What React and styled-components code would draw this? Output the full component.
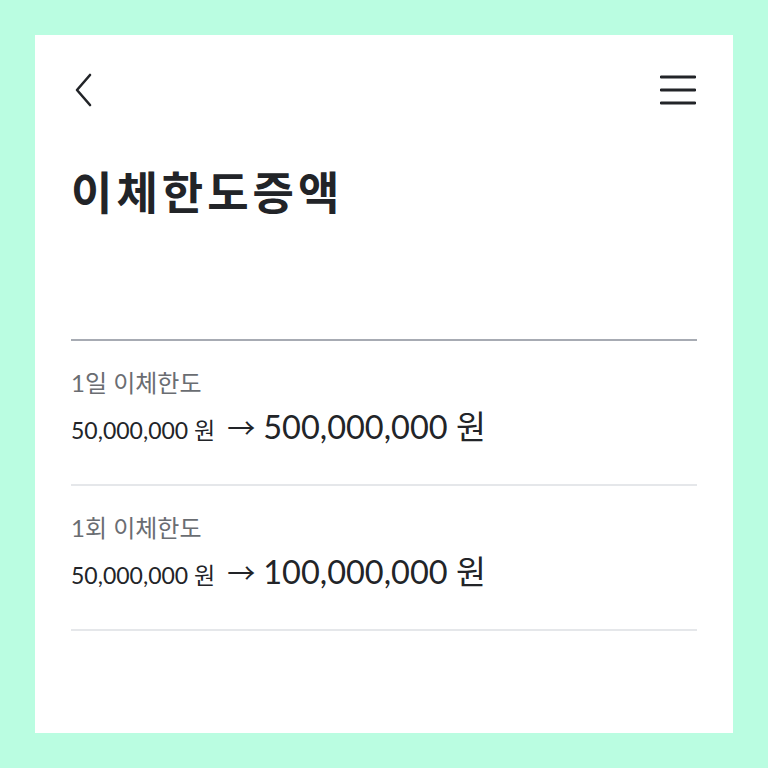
import React from 'react'
import styled, { createGlobalStyle } from 'styled-components'

const GlobalStyle = createGlobalStyle`
  html, body {
    margin: 0;
    padding: 0;
    background: #bafde1;
  }
  body {
    font-family: Lato, 'Noto Sans CJK KR', sans-serif;
  }
`

const Page = styled.div`
  width: 768px;
  height: 768px;
  box-sizing: border-box;
  padding: 35px;
  background: #bafde1;
`

const Card = styled.div`
  width: 698px;
  height: 698px;
  box-sizing: border-box;
  background: #fff;
  padding: 0 36px 0 36px;
`

const Header = styled.div`
  display: flex;
  justify-content: space-between;
  align-items: center;
  height: 110px;
`

const IconButton = styled.button`
  border: 0;
  background: none;
  padding: 0;
  display: flex;
  align-items: center;
  justify-content: center;
  width: ${p => p.$w}px;
  height: 40px;
  margin-right: ${p => p.$mr || 0}px;
  color: #222428;
`

const Title = styled.h1`
  margin: 16px 0 0 0;
  font-family: 'Noto Sans CJK KR', sans-serif;
  font-weight: 700;
  font-size: 45px;
  line-height: 60px;
  color: #222428;
  letter-spacing: 4px;
`

const List = styled.div`
  margin-top: 118px;
  border-top: 2px solid #a7abb3;
`

const Row = styled.div`
  padding: 27px 0 34px;
  border-bottom: 2px solid #e5e7ea;
`

const Label = styled.div`
  font-family: Lato, 'Noto Sans CJK KR', sans-serif;
  font-size: 24px;
  line-height: 30px;
  color: #6a6d72;
`

const Amounts = styled.div`
  display: flex;
  align-items: baseline;
  margin-top: 9px;
  line-height: 40px;
  color: #222428;
`

const From = styled.span`
  font-size: 23px;
`

const Arrow = styled.span`
  font-family: 'Noto Sans CJK KR', sans-serif;
  font-size: 28px;
  margin: 0 8px 0 12px;
`

const To = styled.span`
  font-size: 32.5px;
`

const limits = [
  { label: '1일 이체한도', from: '50,000,000 원', to: '500,000,000 원' },
  { label: '1회 이체한도', from: '50,000,000 원', to: '100,000,000 원' },
]

export default function App() {
  return (
    <>
      <GlobalStyle />
      <Page>
        <Card>
          <Header>
            <IconButton $w={24}>
              <svg width="20" height="36" viewBox="0 0 20 36" fill="none">
                <path d="M17 3 L4 18 L17 33" stroke="currentColor" strokeWidth="2.6" strokeLinecap="round" strokeLinejoin="round" />
              </svg>
            </IconButton>
            <IconButton $w={36} $mr={1}>
              <svg width="36" height="30" viewBox="0 0 36 30" fill="none">
                <path d="M1 2 H35 M1 15 H35 M1 28 H35" stroke="currentColor" strokeWidth="2.8" strokeLinecap="round" />
              </svg>
            </IconButton>
          </Header>
          <Title>이체한도증액</Title>
          <List>
            {limits.map(l => (
              <Row key={l.label}>
                <Label>{l.label}</Label>
                <Amounts>
                  <From>{l.from}</From>
                  <Arrow>→</Arrow>
                  <To>{l.to}</To>
                </Amounts>
              </Row>
            ))}
          </List>
        </Card>
      </Page>
    </>
  )
}
